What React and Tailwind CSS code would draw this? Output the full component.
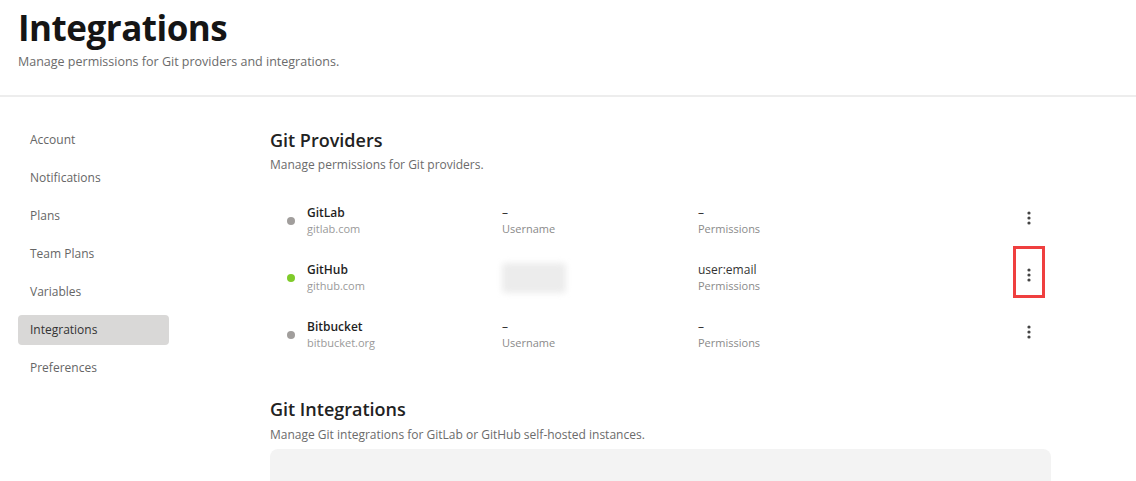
import React from 'react';

const navItems = ['Account', 'Notifications', 'Plans', 'Team Plans', 'Variables', 'Integrations', 'Preferences'];

const providers = [
  { name: 'GitLab', host: 'gitlab.com', connected: false, username: '–', perms: '–' },
  { name: 'GitHub', host: 'github.com', connected: true, username: null, perms: 'user:email', highlight: true },
  { name: 'Bitbucket', host: 'bitbucket.org', connected: false, username: '–', perms: '–' },
];

function Dots() {
  return (
    <svg width="4" height="14" viewBox="0 0 4 14" className="text-[#444]">
      <circle cx="2" cy="2" r="1.6" fill="currentColor" />
      <circle cx="2" cy="7" r="1.6" fill="currentColor" />
      <circle cx="2" cy="12" r="1.6" fill="currentColor" />
    </svg>
  );
}

function ProviderRow({ p }) {
  return (
    <div className="grid grid-cols-[215px_196px_1fr_40px] items-center h-[57px] pl-[17px] pr-[2px]">
      <div className="flex items-center gap-[12px]">
        <span className={`w-2 h-2 rounded-full ${p.connected ? 'bg-[#7fcb2a]' : 'bg-[#a19e9c]'}`}></span>
        <div className="leading-[16px]">
          <div className="text-[12px] font-semibold text-[#1f1f1f]">{p.name}</div>
          <div className="text-[11px] text-[#9a9a9a]">{p.host}</div>
        </div>
      </div>
      <div className="leading-[16px]">
        {p.username ? (
          <>
            <div className="text-[12px] text-[#333]">{p.username}</div>
            <div className="text-[11px] text-[#8a8a8a]">Username</div>
          </>
        ) : (
          <div className="w-[64px] h-[30px] bg-[#ececec] blur-[3px] rounded"></div>
        )}
      </div>
      <div className="leading-[16px]">
        <div className="text-[12px] text-[#333]">{p.perms}</div>
        <div className="text-[11px] text-[#8a8a8a]">Permissions</div>
      </div>
      <div className="relative flex justify-center -translate-y-[3px]">
        <button className="p-1 flex items-center justify-center"><Dots /></button>
        {p.highlight && (
          <div className="absolute left-[4px] top-[-18px] w-[32px] h-[52px] border-[3px] border-[#ef3f3f]"></div>
        )}
      </div>
    </div>
  );
}

export default function App() {
  return (
    <div className="min-h-screen bg-white text-[#1f1f1f]" style={{ fontFamily: '"Open Sans", "Noto Sans", sans-serif' }}>
      {/* Header */}
      <div className="px-[18px] pt-[2px] pb-[23px] border-b-2 border-[#ededed]">
        <h1 className="text-[35px] font-bold tracking-[-0.5px] leading-[52px] text-[#151515]">Integrations</h1>
        <p className="text-[12.5px] text-[#6b6b6b] mt-[-1px]">Manage permissions for Git providers and integrations.</p>
      </div>

      <div className="flex">
        {/* Sidebar */}
        <nav className="w-[270px] shrink-0 pl-[18px] pt-[28px] flex flex-col gap-[8px]">
          {navItems.map((item) => (
            <div
              key={item}
              className={`w-[151px] h-[30px] flex items-center px-3 rounded text-[12px] ${item === 'Integrations' ? 'bg-[#d9d8d7] text-[#333]' : 'text-[#666]'}`}
            >
              {item}
            </div>
          ))}
        </nav>

        {/* Main */}
        <main className="w-[781px] pt-[30px]">
          <h2 className="text-[18px] font-semibold leading-[26px] text-[#222]">Git Providers</h2>
          <p className="text-[12px] text-[#6b6b6b] mt-[3px]">Manage permissions for Git providers.</p>

          <div className="mt-[19px]">
            {providers.map((p) => (
              <ProviderRow key={p.name} p={p} />
            ))}
          </div>

          <h2 className="text-[18px] font-semibold leading-[26px] text-[#222] mt-[32px]">Git Integrations</h2>
          <p className="text-[12px] text-[#6b6b6b] mt-[4px]">Manage Git integrations for GitLab or GitHub self-hosted instances.</p>
          <div className="mt-[5px] h-[80px] bg-[#f3f3f3] rounded-lg"></div>
        </main>
      </div>
    </div>
  );
}
